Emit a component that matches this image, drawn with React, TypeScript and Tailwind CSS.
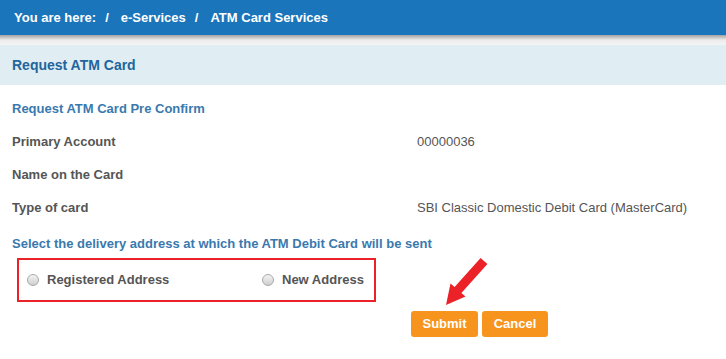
import React from "react";

function Radio() {
  return (
    <span className="inline-block w-[12px] h-[12px] rounded-full border border-[#a9a9a9] bg-gradient-to-b from-[#f4f4f4] to-[#cfcfcf] shrink-0" />
  );
}

export default function App() {
  const rows = [
    { label: "Primary Account", value: "00000036" },
    { label: "Name on the Card", value: "" },
    { label: "Type of card", value: "SBI Classic Domestic Debit Card (MasterCard)" },
  ];
  return (
    <div className="relative w-[726px] h-[359px] bg-white overflow-hidden font-['Liberation_Sans',Arial,sans-serif]">
      <div className="h-[35px] bg-[#1b75bb] flex items-center pl-[14px] text-white font-bold text-[13px] whitespace-nowrap">
        <span>You are here:</span>
        <span className="ml-[9px]">/</span>
        <span className="ml-[12px]">e-Services</span>
        <span className="ml-[9px]">/</span>
        <span className="ml-[12px]">ATM Card Services</span>
      </div>
      <div className="h-[10px] bg-gradient-to-b from-[#a3a3a3] via-[#ececec] to-[#f4f4f4]" />
      <div className="h-[40px] bg-[#e0edf3] flex items-center pl-[12px] text-[14px] font-bold text-[#22659c]">
        Request ATM Card
      </div>
      <div className="pl-[12px] pt-[7px]">
        <div className="h-[33px] leading-[33px] text-[13px] font-bold text-[#3a79ae]">
          Request ATM Card Pre Confirm
        </div>
        {rows.map((r) => (
          <div key={r.label} className="flex h-[33px] leading-[33px] text-[13px] text-[#555555]">
            <div className="w-[405px] font-bold">{r.label}</div>
            <div>{r.value}</div>
          </div>
        ))}
        <div className="mt-[10px] h-[20px] leading-[20px] text-[13px] font-bold text-[#3a79ae]">
          Select the delivery address at which the ATM Debit Card will be sent
        </div>
        <div className="ml-[5px] mt-[4px] w-[359px] h-[44px] border-2 border-[#ea2129] flex items-center text-[13px] font-bold text-[#555555]">
          <div className="flex items-center gap-[8px] pl-[8px] w-[243px]">
            <Radio />
            <span>Registered Address</span>
          </div>
          <div className="flex items-center gap-[8px]">
            <Radio />
            <span>New Address</span>
          </div>
        </div>
        <div className="mt-[9px] ml-[399px] flex gap-[4px]">
          <button className="w-[67px] h-[26px] rounded-[3px] bg-[#f7941d] text-white font-bold text-[13px]">
            Submit
          </button>
          <button className="w-[66px] h-[26px] rounded-[3px] bg-[#f7941d] text-white font-bold text-[13px]">
            Cancel
          </button>
        </div>
      </div>
      <svg className="absolute left-0 top-0" width="726" height="359" viewBox="0 0 726 359">
        <polygon
          points="480.6,258 487.4,264 461.4,293 465.5,296.6 446,305 450.5,283.4 454.6,287"
          fill="#ec2229"
        />
      </svg>
    </div>
  );
}
